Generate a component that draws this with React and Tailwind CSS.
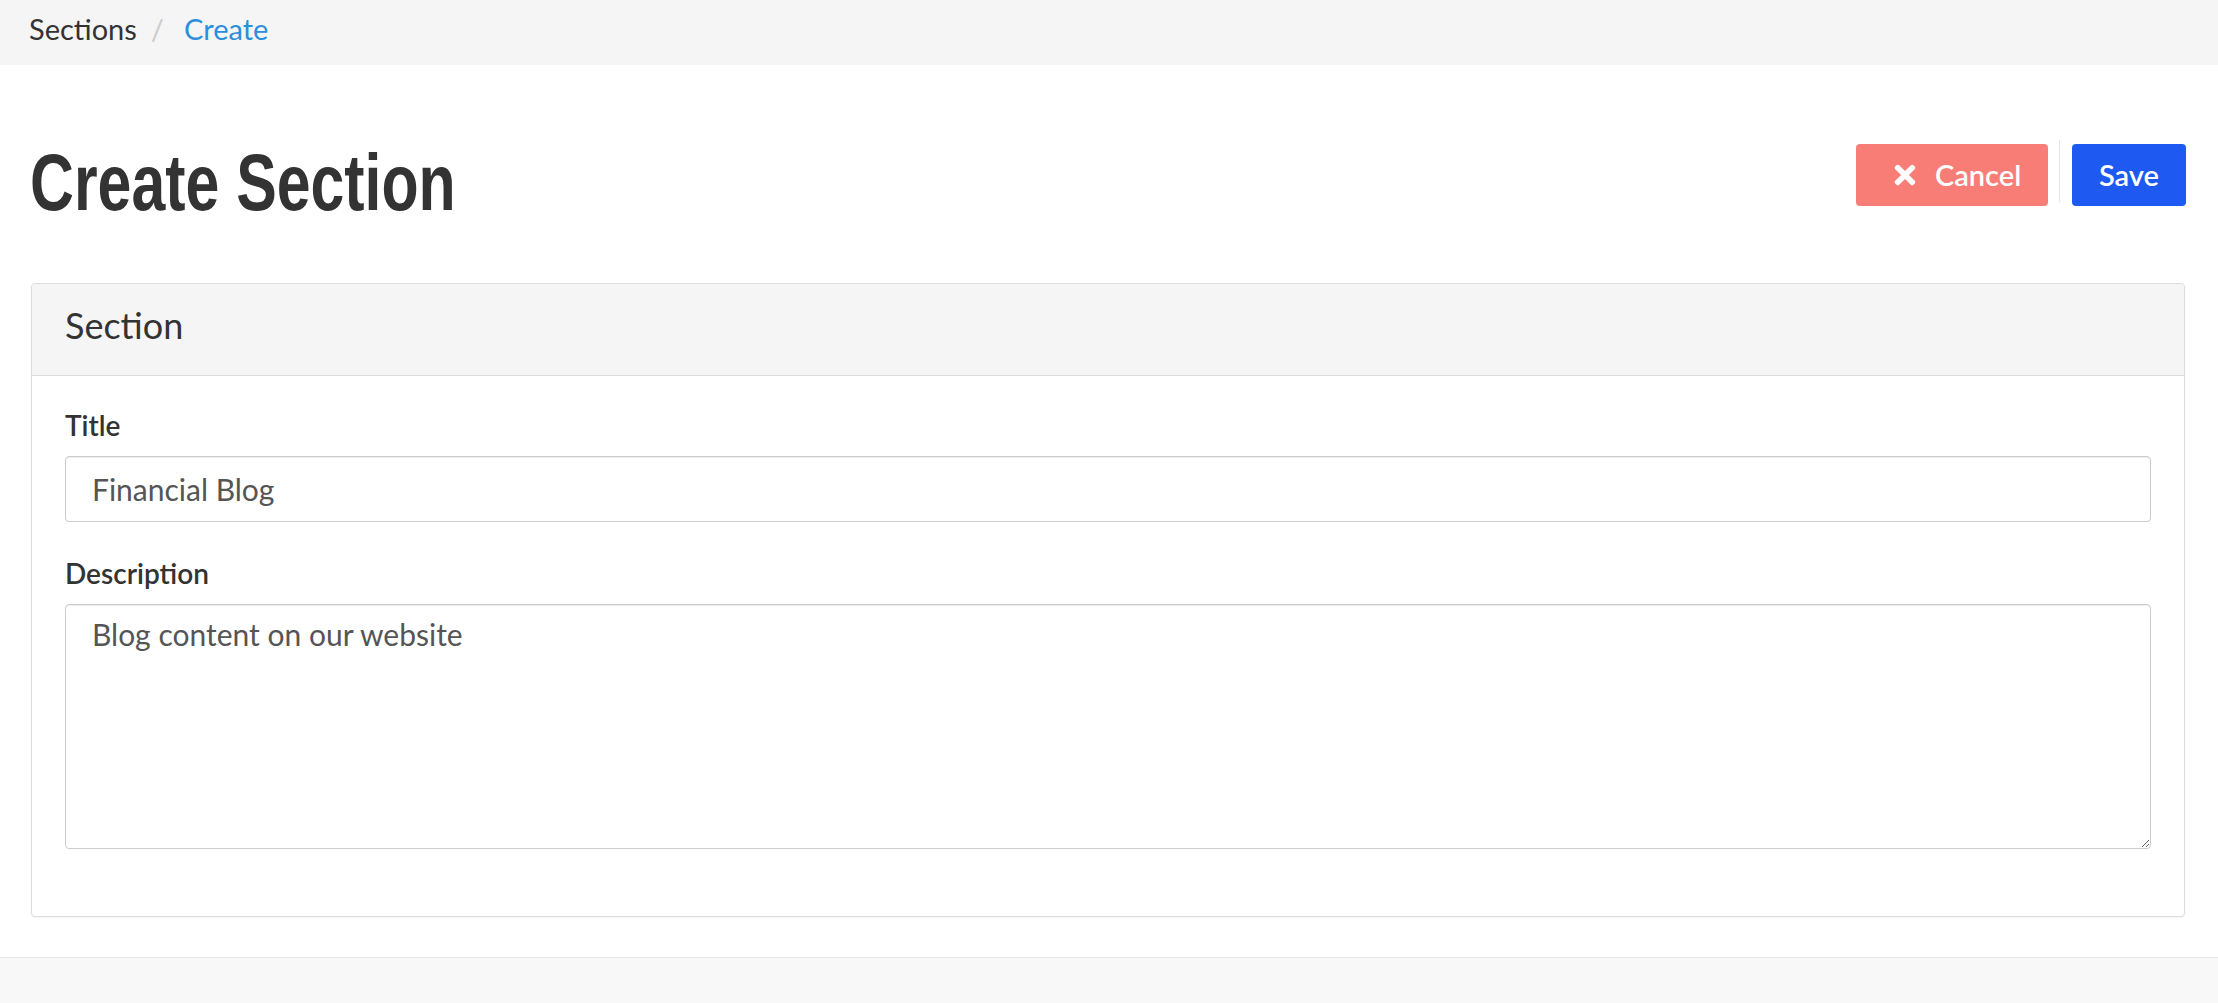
import React from "react";
import { FaTimes } from "react-icons/fa";

export default function App() {
  const lato = "font-['Lato','Open_Sans',sans-serif]";
  return (
    <div className={`min-h-screen flex flex-col bg-white ${lato}`}>
      {/* Breadcrumb */}
      <div className="h-[65px] bg-[#f5f5f5] pl-[29px] pt-[10px] flex items-start text-[29px] leading-[38px]">
        <span className="text-[#333]">Sections</span>
        <span className="ml-[14px] text-[#ccc]">/</span>
        <span className="ml-[20px] text-[#2b8fdb]">Create</span>
      </div>

      <main className="flex-1 pl-[31px] pr-[33px]">
        {/* Header row */}
        <div className="mt-[72px] mb-[60px] -mr-[1px] flex items-start justify-between">
          <h1 className="mt-[6px] -ml-[1px] h-[80px] origin-left scale-x-[0.76] font-['Liberation_Sans','Arial',sans-serif] text-[80px] leading-[80px] font-bold text-[#333] whitespace-nowrap">
            Create Section
          </h1>
          <div className="flex items-start">
            <button className="mt-[7px] w-[192px] h-[62px] rounded-[4px] bg-[#f97d77] text-white flex items-center pl-[34px] gap-[15px] text-[29px] font-semibold">
              <FaTimes size={30} />
              <span>Cancel</span>
            </button>
            <div className="mt-[3px] ml-[11px] mr-[12px] w-px h-[62px] bg-[#e6e6e6]" />
            <button className="mt-[7px] w-[114px] h-[62px] rounded-[4px] bg-[#1e5af1] text-white flex items-center justify-center text-[29px] font-semibold">
              Save
            </button>
          </div>
        </div>

        {/* Card */}
        <div className="border border-[#dddddd] rounded-[4px] shadow-[0_1px_2px_rgba(0,0,0,0.05)] bg-white">
          <div className="h-[92px] bg-[#f5f5f5] border-b border-[#dddddd] rounded-t-[3px] px-[33px] pt-[20px] text-[36px] leading-[43px] text-[#333]">
            Section
          </div>
          <div className="px-[33px] pt-[30px] pb-[67px]">
            <label className="block text-[28px] leading-[38px] font-semibold text-[#333] mb-[12px]">
              Title
            </label>
            <input
              type="text"
              defaultValue="Financial Blog"
              className="block w-full h-[66px] border border-[#cccccc] rounded-[4px] px-[26px] text-[30px] text-[#555] bg-white shadow-[inset_0_1px_1px_rgba(0,0,0,0.075)] outline-none"
            />
            <label className="block mt-[32px] text-[28px] leading-[38px] font-semibold text-[#333] mb-[12px]">
              Description
            </label>
            <textarea
              defaultValue="Blog content on our website"
              className="block w-full h-[245px] border border-[#cccccc] rounded-[4px] px-[26px] pt-[10px] text-[30px] leading-[38px] text-[#555] bg-white shadow-[inset_0_1px_1px_rgba(0,0,0,0.075)] outline-none resize-y"
            />
          </div>
        </div>
      </main>

      <footer className="mt-[39px] h-[46px] border-t border-[#e7e7e7] bg-[#f8f8f8]" />
    </div>
  );
}
